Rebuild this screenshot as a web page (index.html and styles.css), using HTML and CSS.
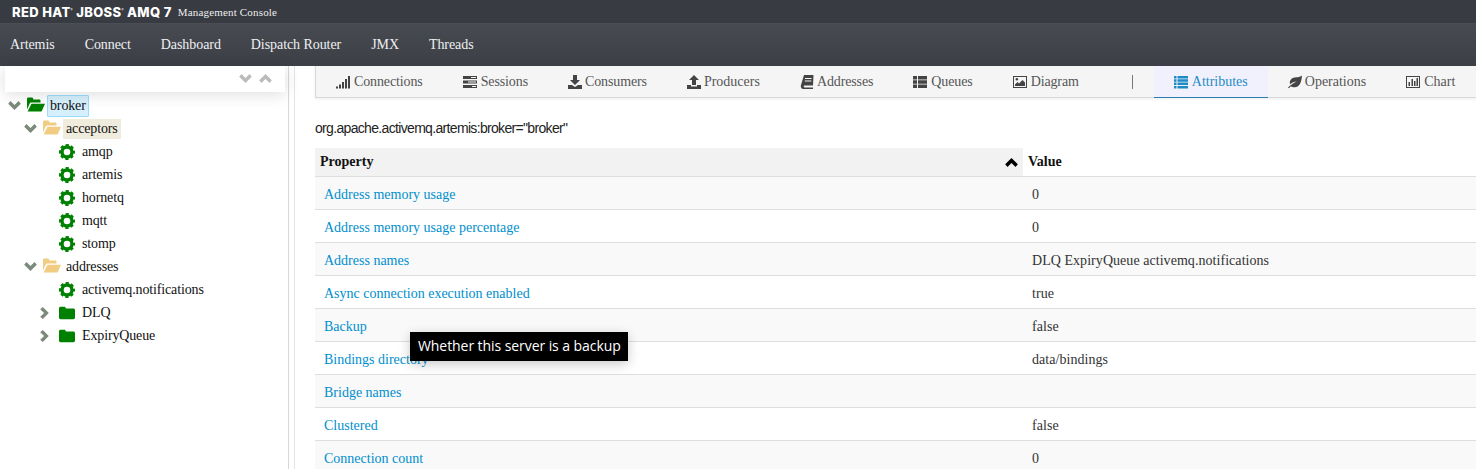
FILE: index.html
```html
<!DOCTYPE html>
<html lang="en">
<head>
<meta charset="utf-8">
<title>Red Hat JBoss AMQ 7 Management Console</title>
<link rel="stylesheet" href="styles.css">
</head>
<body>
<svg class="defs" aria-hidden="true">
  <symbol id="i-signal" viewBox="0 0 14 14"><path d="M0 11.500h2v2H0zM3 9.500h2v4H3zM6 7h2v6.500H6zM9 4h2v9.500H9zM12 1h2v12.500h-2z"/></symbol>
  <symbol id="i-tasks" viewBox="0 0 14 14"><path d="M0 1h14v3H0zM0 5.500h14v3H0zM0 10h14v3H0z"/><path fill="#f5f5f5" d="M8 2h5v1H8zM5 6.500h8v1H5zM9 11h4v1H9z"/></symbol>
  <symbol id="i-down" viewBox="0 0 14 14"><path d="M5 0h4v5h3L7 10 2 5h3zM0 10h4l3 2 3-2h4v4H0z"/></symbol>
  <symbol id="i-up" viewBox="0 0 14 14"><path d="M7 0l5 5H9v5H5V5H2zM0 10h4v1.500h6V10h4v4H0z"/></symbol>
  <symbol id="i-book" viewBox="0 0 14 14"><path d="M4 0h9.500l-.5 10.500H4.500c-1 0-1 2 0 2H13V14H3.500C1 14 .500 11.500 1 10zM5 3v1h6.500V3zM4.800 5.500v1h6.500v-1z" fill-rule="evenodd"/></symbol>
  <symbol id="i-thlist" viewBox="0 0 14 14"><path d="M0 1h4v3.400H0zM5 1h9v3.400H5zM0 5.300h4v3.400H0zM5 5.300h9v3.400H5zM0 9.600h4V13H0zM5 9.600h9V13H5z"/></symbol>
  <symbol id="i-pic" viewBox="0 0 14 14"><path fill-rule="evenodd" d="M0 1h14v12H0zM1 2v10h12V2z"/><path d="M2 11V9.500L4.500 7l1.500 1.500L9.500 5 12 7.500V11z"/><circle cx="3.800" cy="4.300" r="1.300"/></symbol>
  <symbol id="i-list" viewBox="0 0 14 14"><path d="M0 1h2.500v2.500H0zM3.500 1H14v2.500H3.500zM0 4.300h2.500v2.500H0zM3.500 4.300H14v2.500H3.500zM0 7.600h2.500v2.500H0zM3.500 7.600H14v2.500H3.500zM0 10.900h2.500v2.500H0zM3.500 10.900H14v2.500H3.500z"/></symbol>
  <symbol id="i-leaf" viewBox="0 0 15 14"><path d="M15 0C14.500 6 13 12.500 7 12.500c-1.500 0-3-.300-4-1-.700.700-1.200 1.500-2 2.200L0 12.800c1.500-1.300 3.200-2.800 5-4 1.500-1 3-1.800 4.500-2.300C7 6.500 4.500 7.500 2.200 9.500 1 5 4.500 2 9 2c2.500 0 4.500-.800 6-2z"/></symbol>
  <symbol id="i-chart" viewBox="0 0 14 14"><path fill-rule="evenodd" d="M0 1h14v12H0zM1 2v10h12V2z"/><path d="M2.500 7H4v4H2.500zM5.500 4H7v7H5.500zM8 6h1.500v5H8zM10.500 3H12v8h-1.500z"/></symbol>
  <symbol id="i-cog" viewBox="0 0 16 16"><circle cx="8" cy="8" r="5" fill="none" stroke="currentColor" stroke-width="3.400"/><circle cx="8" cy="8" r="6.900" fill="none" stroke="currentColor" stroke-width="2.200" stroke-dasharray="3.200 2.220" stroke-dashoffset="1.600"/></symbol>
  <symbol id="i-open" viewBox="0 0 18 15"><path d="M0 12.500V2c0-.800.600-1.400 1.400-1.400h3.400c.800 0 1.400.600 1.400 1.400v.400h6c.800 0 1.300.500 1.300 1.300V5.500H4.500C3.600 5.500 3 6 2.600 6.700z"/><path d="M4.500 6.800H18l-3.200 7.100c-.200.500-.600.700-1.100.700H.600z"/></symbol>
  <symbol id="i-folder" viewBox="0 0 16 14"><path d="M0 2.400C0 1.500.700.800 1.600.800h3.600c.900 0 1.600.700 1.600 1.600h7.600c.900 0 1.600.700 1.600 1.600v7.600c0 .900-.700 1.600-1.600 1.600H1.600C.700 13.200 0 12.500 0 11.600z"/></symbol>
  <symbol id="i-cd" viewBox="0 0 14 10"><path d="M2.500 0L7 4.500 11.500 0 14 3 7 10 0 3z"/></symbol>
  <symbol id="i-cu" viewBox="0 0 14 10"><path d="M2.500 10L7 5.500 11.500 10 14 7 7 0 0 7z"/></symbol>
  <symbol id="i-cr" viewBox="0 0 10 14"><path d="M0 2.500L4.500 7 0 11.500 3 14 10 7 3 0z"/></symbol>
</svg>

<header class="brandbar">
  <span class="brand">RED HAT<sup>®</sup> JBOSS<sup>®</sup> AMQ 7</span>
  <span class="brand-sub">Management Console</span>
</header>
<nav class="mainnav">
  <a>Artemis</a><a>Connect</a><a>Dashboard</a><a>Dispatch Router</a><a>JMX</a><a>Threads</a>
</nav>

<div class="workspace">
  <aside class="sidebar">
    <div class="searchbox">
      <svg class="sb-ic"><use href="#i-cd"/></svg>
      <svg class="sb-ic"><use href="#i-cu"/></svg>
    </div>
    <ul class="tree">
      <li class="node lvl0"><svg class="chev"><use href="#i-cd"/></svg><svg class="ic-open green"><use href="#i-open"/></svg><span class="label selected">broker</span></li>
      <li class="node lvl1"><svg class="chev"><use href="#i-cd"/></svg><svg class="ic-open tan"><use href="#i-open"/></svg><span class="label hovered">acceptors</span></li>
      <li class="node lvl2"><svg class="ic-cog green"><use href="#i-cog"/></svg><span class="label">amqp</span></li>
      <li class="node lvl2"><svg class="ic-cog green"><use href="#i-cog"/></svg><span class="label">artemis</span></li>
      <li class="node lvl2"><svg class="ic-cog green"><use href="#i-cog"/></svg><span class="label">hornetq</span></li>
      <li class="node lvl2"><svg class="ic-cog green"><use href="#i-cog"/></svg><span class="label">mqtt</span></li>
      <li class="node lvl2"><svg class="ic-cog green"><use href="#i-cog"/></svg><span class="label">stomp</span></li>
      <li class="node lvl1"><svg class="chev"><use href="#i-cd"/></svg><svg class="ic-open tan"><use href="#i-open"/></svg><span class="label">addresses</span></li>
      <li class="node lvl2"><svg class="ic-cog green"><use href="#i-cog"/></svg><span class="label">activemq.notifications</span></li>
      <li class="node lvl2 branch"><svg class="chev-r"><use href="#i-cr"/></svg><svg class="ic-cog green"><use href="#i-folder"/></svg><span class="label">DLQ</span></li>
      <li class="node lvl2 branch"><svg class="chev-r"><use href="#i-cr"/></svg><svg class="ic-cog green"><use href="#i-folder"/></svg><span class="label">ExpiryQueue</span></li>
    </ul>
  </aside>

  <main class="content">
    <ul class="tabs">
      <li class="tab"><svg class="tab-ic"><use href="#i-signal"/></svg>Connections</li>
      <li class="tab"><svg class="tab-ic"><use href="#i-tasks"/></svg>Sessions</li>
      <li class="tab"><svg class="tab-ic narrow"><use href="#i-down"/></svg>Consumers</li>
      <li class="tab loose"><svg class="tab-ic narrow"><use href="#i-up"/></svg>Producers</li>
      <li class="tab"><svg class="tab-ic narrow"><use href="#i-book"/></svg>Addresses</li>
      <li class="tab"><svg class="tab-ic"><use href="#i-thlist"/></svg>Queues</li>
      <li class="tab"><svg class="tab-ic"><use href="#i-pic"/></svg>Diagram</li>
      <li class="tab-sep"></li>
      <li class="tab loose active"><svg class="tab-ic"><use href="#i-list"/></svg>Attributes</li>
      <li class="tab loose"><svg class="tab-ic narrow"><use href="#i-leaf"/></svg>Operations</li>
      <li class="tab loose"><svg class="tab-ic"><use href="#i-chart"/></svg>Chart</li>
    </ul>

    <h1 class="mbean">org.apache.activemq.artemis:broker="broker"</h1>

    <table class="attrs">
      <thead>
        <tr><th class="sorted">Property<svg class="sort"><use href="#i-cu"/></svg></th><th>Value</th></tr>
      </thead>
      <tbody>
        <tr><td><a>Address memory usage</a></td><td>0</td></tr>
        <tr><td><a>Address memory usage percentage</a></td><td>0</td></tr>
        <tr><td><a>Address names</a></td><td>DLQ ExpiryQueue activemq.notifications</td></tr>
        <tr><td><a>Async connection execution enabled</a></td><td>true</td></tr>
        <tr><td><a>Backup</a></td><td>false</td></tr>
        <tr><td><a>Bindings directory</a></td><td>data/bindings</td></tr>
        <tr><td><a>Bridge names</a></td><td></td></tr>
        <tr><td><a>Clustered</a></td><td>false</td></tr>
        <tr><td><a>Connection count</a></td><td>0</td></tr>
      </tbody>
    </table>
  </main>
</div>

<div class="tooltip">Whether this server is a backup</div>
</body>
</html>
```
FILE: styles.css
```css
* { box-sizing: border-box; }
html, body { height: 100%; }
body {
  margin: 0;
  height: 469px;
  overflow: hidden;
  background: #fff;
  color: #222;
  font: 14px/20px "Liberation Serif", serif;
  display: flex;
  flex-direction: column;
  position: relative;
}
ul { list-style: none; margin: 0; padding: 0; }
svg { fill: currentColor; flex: none; }
.defs { width: 0; height: 0; position: absolute; }

.brandbar {
  height: 24px;
  flex: none;
  background: #383b42;
  border-bottom: 1px solid #4b4e55;
  color: #fff;
  display: flex;
  align-items: center;
  padding: 0 0 0 12px;
}
.brand {
  font: 800 13px/16px Inter, sans-serif;
  letter-spacing: .35px;
  white-space: nowrap;
}
.brand sup { font-size: 3px; font-weight: 400; vertical-align: 6px; line-height: 0; }
.brand-sub {
  font-size: 11px;
  letter-spacing: .18px;
  margin-left: 6px;
  color: #eee;
}

.mainnav {
  height: 42px;
  flex: none;
  background: linear-gradient(#474a50, #3c3f46);
  display: flex;
  align-items: center;
  padding-left: 10px;
  gap: 30px;
  color: #eef0f2;
  letter-spacing: -.07px;
}

.workspace { flex: 1; display: flex; min-height: 0; }

.sidebar {
  width: 295px;
  flex: none;
  border-right: 1px solid #e4e4e4;
  padding-right: 6px;
  position: relative;
}
.sidebar::after {
  content: "";
  position: absolute;
  top: 0; bottom: 0; left: 288px;
  border-left: 1px solid #d8d8d8;
}
.searchbox {
  margin-left: 5px;
  width: 280px;
  height: 26px;
  background: #fff;
  box-shadow: 0 2px 16px rgba(0,0,0,.14);
  display: flex;
  justify-content: flex-end;
  align-items: center;
  gap: 7px;
  padding: 0 13px 0 0;
  position: relative;
  z-index: 1;
}
.sb-ic { width: 13px; height: 9px; color: #bbb; margin-top: -2px; }

.tree { padding-top: 2px; letter-spacing: -.14px; }
.node { height: 23px; display: flex; align-items: center; color: #111; white-space: nowrap; }
.lvl0 { padding-left: 8px; }
.lvl1 { padding-left: 24px; }
.lvl2 { padding-left: 59px; }
.lvl2.branch { padding-left: 40px; }
.chev { width: 13px; height: 9px; color: #7c8a7c; margin-right: 6px; }
.chev-r { width: 9px; height: 12px; color: #7c8a7c; margin-right: 10px; }
.ic-open { width: 18px; height: 15px; margin-top: -3px; }
.ic-cog { width: 16px; height: 16px; }
.green { color: #008000; }
.tan { color: #f0cd82; }
.label { padding: 0 3px; line-height: 20px; }
.lvl0 .label, .lvl1 .label { margin-left: 2px; }
.lvl2 .label { margin-left: 4px; }
.selected { background: #d5f0fc; border: 1px solid #9bdcfc; padding: 0 2px; border-radius: 1px; }
.hovered { background: #efebdd; }

.content { flex: 1; min-width: 0; padding: 0 0 0 20px; overflow: hidden; }

.tabs {
  height: 32px;
  display: flex;
  background: #f5f5f5;
  border-left: 1px solid #d9d9d9;
  border-bottom: 1px solid #d9d9d9;
  box-shadow: 0 1px 3px rgba(0,0,0,.08);
  white-space: nowrap;
  color: #555;
  letter-spacing: -.12px;
}
.tab {
  flex: none;
  display: flex;
  align-items: center;
  padding: 0 20px;
}
.tab.loose { letter-spacing: 0; }
.tab-ic { width: 14px; height: 14px; margin-right: 4px; color: #444; }
.tab-ic.narrow { margin-right: 3px; }
.tab-sep {
  flex: none;
  width: 1px;
  height: 14px;
  align-self: center;
  background: #777;
  margin: 0 21px 0 33px;
}
.tab.active {
  background: #f1f1fd;
  color: #1f8bc4;
  border-bottom: 1px solid #2a7fb0;
  margin-bottom: -1px;
}
.tab.active .tab-ic { color: #1f8bc4; }

.mbean {
  margin: 20px 0 10px;
  font: 400 14px/20px "Liberation Sans", sans-serif;
  letter-spacing: -.67px;
  color: #222;
  white-space: nowrap;
}

.attrs {
  width: 1161px;
  border-collapse: separate;
  border-spacing: 0;
  table-layout: fixed;
}
.attrs th {
  height: 29px;
  padding: 0 5px;
  text-align: left;
  font-weight: 700;
  color: #111;
  border-bottom: 1px solid #dedede;
}
.attrs th:first-child { width: 708px; }
.attrs th.sorted { background: #f2f2f2; position: relative; }
.sort { position: absolute; right: 5px; top: 10px; width: 13px; height: 9px; color: #000; }
.attrs td {
  height: 33px;
  padding: 4px 9px 0;
  border-bottom: 1px solid #dedede;
  color: #333;
  white-space: nowrap;
  letter-spacing: .05px;
}
.attrs td:first-child { letter-spacing: 0; }
.attrs tbody tr:nth-child(odd) td { background: #f9f9f9; }
.attrs a { color: #008fce; }

.tooltip {
  position: absolute;
  left: 410px;
  top: 332px;
  width: 218px;
  height: 29px;
  padding-left: 8px;
  background: #000;
  color: #fff;
  font: 14px/28px "Open Sans", sans-serif;
  letter-spacing: -.07px;
  box-shadow: 0 3px 12px rgba(0,0,0,.22);
  white-space: nowrap;
}
```
